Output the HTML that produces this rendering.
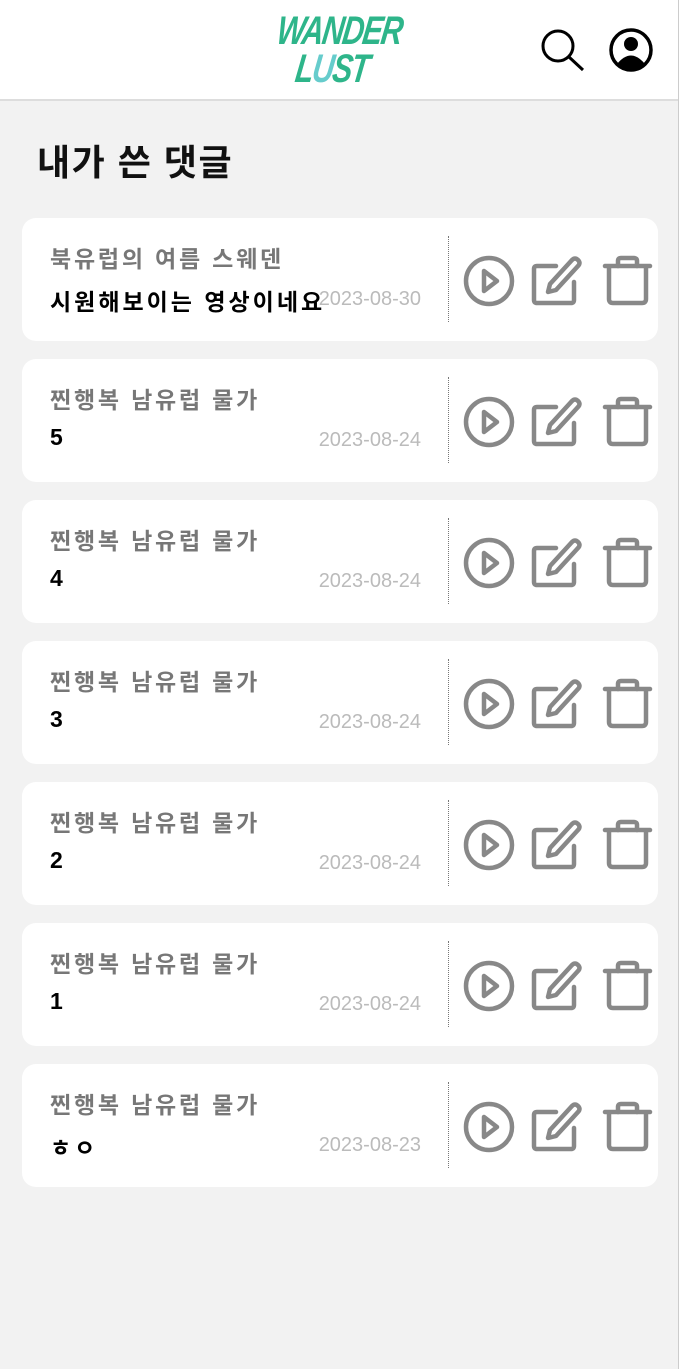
<!DOCTYPE html>
<html><head><meta charset="utf-8"><style>
*{margin:0;padding:0;box-sizing:border-box}
body{width:679px;height:1369px;background:#f2f2f2;font-family:"Liberation Sans","Noto Sans CJK KR",sans-serif;position:relative;overflow:hidden;border-right:1px solid #ccc}
.hd{position:absolute;left:0;top:0;width:678px;height:101px;background:#fff;border-bottom:2px solid #ddd}
.logo{position:absolute;left:280px;top:12px;font-style:italic;font-weight:bold;font-size:40px;line-height:38px;color:#2eb58a;text-align:center;letter-spacing:-2px;transform:skewX(-8deg) scaleX(.75);transform-origin:left top;width:160px}
h1{position:absolute;left:37px;top:134px;font-size:36px;font-weight:bold;color:#111;letter-spacing:1.5px}
.card{position:absolute;left:22px;width:636px;height:123px;background:#fff;border-radius:14px}
.t{position:absolute;left:28px;top:22px;font-size:23px;font-weight:bold;color:#777;letter-spacing:2.8px}
.c{position:absolute;left:28px;top:65px;font-size:23px;font-weight:bold;color:#000;letter-spacing:3px;z-index:1}
.d{position:absolute;right:237px;top:70px;font-size:20px;color:#bbb}
.sep{position:absolute;left:426px;top:18px;height:86px;border-left:1px dotted #777}
.ic{position:absolute;left:440px;top:36px}
</style></head><body>
<div class="hd">
<div class="logo">WANDER<br><span style="color:#2eb58a">L</span><span style="color:#6cc">U</span>ST</div>
<svg style="position:absolute;left:538px;top:26px" width="50" height="48" viewBox="0 0 50 48"><circle cx="20" cy="20" r="15" fill="none" stroke="#000" stroke-width="3"/><line x1="31" y1="31" x2="45" y2="44" stroke="#000" stroke-width="3"/></svg>
<svg style="position:absolute;left:608px;top:27px" width="46" height="46" viewBox="0 0 46 46"><circle cx="23" cy="23" r="20" fill="none" stroke="#000" stroke-width="3.5"/><circle cx="23" cy="17" r="7" fill="#000"/><path d="M9 37 Q23 20 37 37 Q23 47 9 37Z" fill="#000"/></svg>
</div>
<h1>내가 쓴 댓글</h1>
<div id="list"></div>
<script>
var items=[["북유럽의 여름 스웨덴","시원해보이는 영상이네요","2023-08-30"],["찐행복 남유럽 물가","5","2023-08-24"],["찐행복 남유럽 물가","4","2023-08-24"],["찐행복 남유럽 물가","3","2023-08-24"],["찐행복 남유럽 물가","2","2023-08-24"],["찐행복 남유럽 물가","1","2023-08-24"],["찐행복 남유럽 물가","ㅎㅇ","2023-08-23"]];
var ic='<svg class="ic" width="196" height="56" viewBox="0 0 196 56" fill="none" stroke="#888" stroke-width="4.5" stroke-linecap="round" stroke-linejoin="round"><circle cx="27" cy="27" r="23"/><path d="M22 17 L35 27 L22 37Z"/><path d="M112 28 V46 Q112 49 109 49 H75 Q72 49 72 46 V15 Q72 12 75 12 H94"/><path d="M86 38 L88 30 L110 6 Q113 3 116 6 Q119 9 116 12 L94 36Z"/><path d="M143 12 H188"/><path d="M156 12 V7 Q156 4 159 4 H172 Q175 4 175 7 V12"/><path d="M147 14 V45 Q147 49 151 49 H180 Q184 49 184 45 V14"/></svg>';
var h='';items.forEach(function(it,i){h+='<div class="card" style="top:'+(218+141*i)+'px"><div class="t">'+it[0]+'</div><div class="c">'+it[1]+'</div><div class="d">'+it[2]+'</div><div class="sep"></div>'+ic+'</div>';});
document.getElementById('list').innerHTML=h;
</script>
</body></html>
